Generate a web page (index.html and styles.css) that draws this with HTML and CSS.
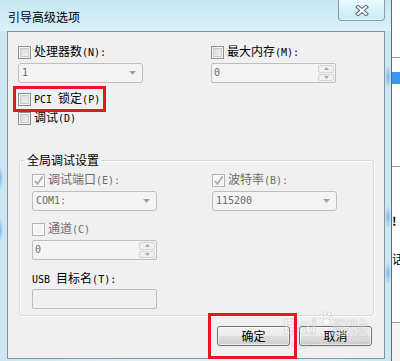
FILE: index.html
```html
<!DOCTYPE html>
<html lang="zh-CN">
<head>
<meta charset="utf-8">
<title>引导高级选项</title>
<link rel="stylesheet" href="styles.css">
</head>
<body>
<div class="screen">
  <div class="window">
    <div class="titlebar">
      <span class="title">引导高级选项</span>
      <div class="close">
        <svg width="14" height="11" viewBox="0 0 14 11"><path d="M3 2 L11 9 M11 2 L3 9" stroke="#55626c" stroke-width="4" stroke-linecap="square" fill="none"/><path d="M3 2 L11 9 M11 2 L3 9" stroke="#fff" stroke-width="2" stroke-linecap="square" fill="none"/></svg>
      </div>
    </div>
    <div class="client">
      <div class="grid-top">
        <div class="field">
          <label class="chk"><span class="box"></span><span>处理器数<span class="m">(N):</span></span></label>
          <div class="combo"><span class="val m">1</span><svg class="arrow" width="7" height="4" viewBox="0 0 7 4"><polygon points="0,0 7,0 3.5,4" fill="#a2a2a2"/></svg></div>
        </div>
        <div class="field">
          <label class="chk"><span class="box"></span><span>最大内存<span class="m">(M):</span></span></label>
          <div class="spin"><span class="val m">0</span><span class="btns"><span class="sb"><svg width="5" height="3" viewBox="0 0 5 3"><polygon points="0,3 5,3 2.5,0" fill="#a8a8a8"/></svg></span><span class="sb"><svg width="5" height="3" viewBox="0 0 5 3"><polygon points="0,0 5,0 2.5,3" fill="#a8a8a8"/></svg></span></span></div>
        </div>
      </div>
      <label class="chk row-pci"><span class="box"></span><span><span class="m">PCI </span>锁定<span class="m">(P)</span></span></label>
      <label class="chk row-dbg"><span class="box"></span><span>调试<span class="m">(D)</span></span></label>

      <fieldset class="group">
        <legend>全局调试设置</legend>
        <div class="grid-group">
          <div class="field">
            <label class="chk dis"><span class="box checked"><svg width="11" height="11" viewBox="0 0 11 11"><path d="M2 6 L4.5 9 L9.5 1.5" stroke="#a9a9a9" stroke-width="1.6" fill="none"/></svg></span><span>调试端口<span class="m">(E):</span></span></label>
            <div class="combo"><span class="val m">COM1:</span><svg class="arrow" width="7" height="4" viewBox="0 0 7 4"><polygon points="0,0 7,0 3.5,4" fill="#a2a2a2"/></svg></div>
          </div>
          <div class="field">
            <label class="chk dis"><span class="box checked"><svg width="11" height="11" viewBox="0 0 11 11"><path d="M2 6 L4.5 9 L9.5 1.5" stroke="#a9a9a9" stroke-width="1.6" fill="none"/></svg></span><span>波特率<span class="m">(B):</span></span></label>
            <div class="combo"><span class="val m">115200</span><svg class="arrow" width="7" height="4" viewBox="0 0 7 4"><polygon points="0,0 7,0 3.5,4" fill="#a2a2a2"/></svg></div>
          </div>
        </div>
        <div class="field gap-row">
          <label class="chk dis"><span class="box disbox"></span><span>通道<span class="m">(C)</span></span></label>
          <div class="spin narrow"><span class="val m">0</span><span class="btns"><span class="sb"><svg width="5" height="3" viewBox="0 0 5 3"><polygon points="0,3 5,3 2.5,0" fill="#a8a8a8"/></svg></span><span class="sb"><svg width="5" height="3" viewBox="0 0 5 3"><polygon points="0,0 5,0 2.5,3" fill="#a8a8a8"/></svg></span></span></div>
        </div>
        <div class="field gap-row">
          <div class="lab"><span class="m">USB </span>目标名<span class="m">(T):</span></div>
          <div class="text-input"></div>
        </div>
      </fieldset>

      <div class="buttons">
        <button class="btn">确定</button>
        <button class="btn">取消</button>
      </div>
    </div>
  </div>
  <div class="desk">
    <div class="d-top"></div>
    <div class="d-line"></div>
    <div class="d-gap1"></div>
    <div class="d-blue"></div>
    <div class="d-gap2"></div>
    <div class="d-line"></div>
    <div class="d-txt1">!</div>
    <div class="d-txt2">话</div>
    <div class="d-line"></div>
    <div class="d-bottom"></div>
  </div>

  <div class="glow g1"></div>
  <div class="glow g2"></div>
  <div class="glow g3"></div>
  <div class="glow g4"></div>
  <div class="glow g5"></div>

  <div class="watermark">
    <span class="wm-bai">Bai</span>
    <svg class="wm-paw" width="16" height="16" viewBox="0 0 18 18"><g fill="rgba(255,255,255,0.5)" stroke="rgba(175,175,175,0.35)" stroke-width="1"><ellipse cx="4" cy="6" rx="2" ry="2.5"/><ellipse cx="8" cy="3" rx="2" ry="2.5"/><ellipse cx="12.5" cy="3.5" rx="2" ry="2.5"/><ellipse cx="15" cy="8" rx="2" ry="2.5"/><ellipse cx="9.5" cy="12.5" rx="4.5" ry="4"/></g></svg>
    <span class="wm-jy">经验</span>
    <span class="wm-url">jingyan.baidu.com</span>
  </div>

  <div class="hl hl-pci"></div>
  <div class="hl hl-ok"></div>
</div>
</body>
</html>
```

FILE: styles.css
```css
* { box-sizing: border-box; }

body {
  margin: 0;
  width: 400px;
  height: 361px;
  overflow: hidden;
  font: 12px/14px "Noto Sans CJK SC", "Noto Sans", sans-serif;
  color: #000;
  background: #fff;
}

.m {
  font-family: "DejaVu Sans Mono", "Liberation Mono", monospace;
  font-size: 10px;
}

.screen {
  position: relative;
  display: flex;
  width: 400px;
  height: 361px;
  overflow: hidden;
  background: #fff;
}

.window {
  flex: none;
  width: 392px;
  height: 361px;
  border-right: 1px solid #5f6b74;
  background: linear-gradient(90deg, #cbe7f3 0%, #dcf2fa 40%, #d6effa 80%, #c9e8f4 100%);
  display: flex;
  flex-direction: column;
}

.titlebar {
  flex: none;
  height: 31px;
  display: flex;
  justify-content: space-between;
  align-items: flex-start;
  background: linear-gradient(#c6e6f3, #d9f1f9);
}

.title {
  padding: 10px 0 0 8px;
  line-height: 14px;
  font-size: 12px;
}

.close {
  width: 47px;
  height: 21px;
  margin-right: 6px;
  border: 1px solid #8d9ba6;
  border-top: none;
  border-radius: 0 0 4px 4px;
  background: linear-gradient(#eafafe, #d3f0f9 60%, #c8ecf7);
  box-shadow: inset 0 -1px 0 rgba(255,255,255,0.7);
  display: flex;
  align-items: center;
  justify-content: center;
  padding-top: 1px;
}

.client {
  flex: 1;
  margin: 0 6px 2px 7px;
  border: 1px solid #8a939a;
  background: #f0f0f0;
  padding: 13px 0 0 10px;
  display: flex;
  flex-direction: column;
}

.grid-top {
  display: grid;
  grid-template-columns: 193px 125px;
}

.grid-group {
  display: grid;
  grid-template-columns: 180px 125px;
}

.field {
  display: flex;
  flex-direction: column;
  gap: 4px;
  width: 125px;
}

.chk {
  display: flex;
  align-items: center;
  height: 14px;
  gap: 3px;
  white-space: nowrap;
}

.chk.dis { color: #6d6d6d; }

.lab {
  height: 14px;
  white-space: nowrap;
}

.box {
  flex: none;
  width: 13px;
  height: 13px;
  border: 1px solid #8e8f8f;
  background: linear-gradient(135deg, #d4d4d4, #f6f6f6);
  box-shadow: inset 0 0 0 1px #f4f4f4, inset 0 0 0 2px #c9c9c9;
}

.box.checked, .box.disbox {
  border-color: #b4b4b4;
  background: #f4f4f4;
  box-shadow: inset 0 0 0 1px #fafafa;
  display: flex;
  align-items: center;
  justify-content: center;
}

.combo {
  width: 125px;
  height: 20px;
  border: 1px solid #bcbfc2;
  border-radius: 3px;
  background: #f4f4f4;
  display: flex;
  align-items: center;
  justify-content: space-between;
  padding: 0 6px 0 3px;
  color: #6d6d6d;
}

.spin {
  width: 125px;
  height: 20px;
  border: 1px solid #bcbfc2;
  border-radius: 2px;
  background: #f4f4f4;
  display: flex;
  color: #6d6d6d;
}

.spin .val {
  flex: 1;
  line-height: 18px;
  padding-left: 2px;
}

.btns {
  width: 17px;
  display: flex;
  flex-direction: column;
  padding: 1px 1px 1px 0;
  gap: 1px;
}

.sb {
  flex: 1;
  border: 1px solid #d2d4d6;
  border-radius: 2px;
  background: #f0f0f0;
  display: flex;
  align-items: center;
  justify-content: center;
}

.text-input {
  width: 125px;
  height: 20px;
  border: 1px solid #bcbfc2;
  border-radius: 2px;
  background: #f0f0f0;
}

.row-pci { margin-top: 9px; }
.row-dbg { margin-top: 5px; }

.group {
  margin: 28px 10px 0 1px;
  padding: 6px 0 6px 12px;
  border: 1px solid #d3dce2;
  border-radius: 3px;
  box-shadow: inset 1px 1px 0 #fff, 1px 1px 0 #fff;
  min-width: 0;
}

.group legend {
  padding: 0 2px;
  margin-left: -7px;
  line-height: 14px;
}

.gap-row { margin-top: 11px; }

.buttons {
  display: flex;
  justify-content: flex-end;
  gap: 9px;
  margin: 10px 12px 0 0;
}

.btn {
  width: 73px;
  height: 20px;
  margin: 0;
  padding: 0;
  border: 1px solid #707070;
  border-radius: 3px;
  background: linear-gradient(#f2f2f2 0%, #ebebeb 50%, #dddddd 51%, #cfcfcf 100%);
  box-shadow: inset 0 0 0 1px rgba(255,255,255,0.6);
  font: 12px/14px "Noto Sans CJK SC", sans-serif;
  color: #000;
}

/* desktop strip on the right */
.desk {
  flex: 1;
  display: flex;
  flex-direction: column;
  background: #fff;
  overflow: hidden;
}
.d-top { height: 57px; }
.d-line { height: 1px; background: #9c9c9c; flex: none; }
.d-gap1 { height: 14px; }
.d-blue { height: 12px; background: #3b96f2; }
.d-gap2 { height: 82px; }
.d-txt1 { height: 85px; padding-top: 48px; font-weight: bold; line-height: 12px; white-space: nowrap; }
.d-txt2 { height: 70px; line-height: 14px; white-space: nowrap; }
.d-bottom { flex: 1; background: #f4f4f4; }

/* glass glows showing through the frame */
.glow {
  position: absolute;
  width: 6px;
  border-radius: 3px;
  background: radial-gradient(ellipse at center, rgba(80,150,225,0.6), rgba(120,180,235,0) 75%);
}
.g1 { left: 385px; top: 66px; height: 22px; }
.g2 { left: 385px; top: 206px; height: 22px; }
.g3 { left: 385px; top: 262px; height: 22px; }
.g4 { left: -3px; top: 166px; height: 24px; }
.g5 { left: -3px; top: 218px; height: 24px; }

/* watermark */
.watermark {
  position: absolute;
  left: 282px;
  top: 309px;
  width: 86px;
  height: 42px;
  pointer-events: none;
}
.wm-bai {
  position: absolute;
  left: 1px;
  top: 6px;
  font: bold 22px/24px "Liberation Sans", sans-serif;
  color: rgba(255,255,255,0.3);
  -webkit-text-stroke: 1px rgba(175,175,175,0.35);
}
.wm-paw { position: absolute; left: 36px; top: 2px; }
.wm-jy {
  position: absolute;
  left: 50px;
  top: 8px;
  font: bold 18px/20px "Noto Sans CJK SC", sans-serif;
  color: rgba(255,255,255,0.3);
  -webkit-text-stroke: 1px rgba(175,175,175,0.35);
}
.wm-url {
  position: absolute;
  left: 6px;
  top: 30px;
  font: 9px/10px "Liberation Sans", sans-serif;
  color: rgba(175,175,175,0.35);
  letter-spacing: 0.4px;
}

/* red annotation boxes */
.hl {
  position: absolute;
  border: 3px solid #e8161f;
}
.hl-pci { left: 13px; top: 86px; width: 93px; height: 26px; }
.hl-ok { left: 208px; top: 313px; width: 89px; height: 46px; }
```
